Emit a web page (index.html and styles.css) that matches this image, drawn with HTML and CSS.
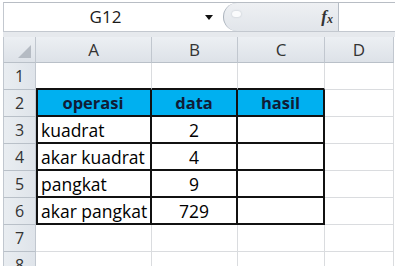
FILE: index.html
```html
<!DOCTYPE html>
<html>
<head lang="en">
    <meta charset="UTF-8">
    <title>Sheet1</title>
    <link rel="stylesheet" href="styles.css">
</head>
<body>
<div class="sheet">
    <div class="formula-bar">
        <div class="name-box">G12</div>
        <span class="drop"></span>
        <div class="fx-pill">
            <span class="knob"></span>
            <span class="fx">f<sub>x</sub></span>
        </div>
        <div class="input"></div>
    </div>
    <div class="band"></div>
    <div class="grid">
        <div class="corner"><span class="tri"></span></div>
        <div class="col-head">A</div>
        <div class="col-head">B</div>
        <div class="col-head">C</div>
        <div class="col-head">D</div>

        <div class="row-head">1</div>
        <div class="cell top"></div>
        <div class="cell top"></div>
        <div class="cell top"></div>
        <div class="cell"></div>

        <div class="row-head">2</div>
        <div class="cell tb first head">operasi</div>
        <div class="cell tb head">data</div>
        <div class="cell tb head">hasil</div>
        <div class="cell"></div>

        <div class="row-head">3</div>
        <div class="cell tb first">kuadrat</div>
        <div class="cell tb num">2</div>
        <div class="cell tb"></div>
        <div class="cell"></div>

        <div class="row-head">4</div>
        <div class="cell tb first">akar kuadrat</div>
        <div class="cell tb num">4</div>
        <div class="cell tb"></div>
        <div class="cell"></div>

        <div class="row-head">5</div>
        <div class="cell tb first">pangkat</div>
        <div class="cell tb num">9</div>
        <div class="cell tb"></div>
        <div class="cell"></div>

        <div class="row-head">6</div>
        <div class="cell tb first">akar pangkat</div>
        <div class="cell tb num">729</div>
        <div class="cell tb"></div>
        <div class="cell"></div>

        <div class="row-head">7</div>
        <div class="cell"></div>
        <div class="cell"></div>
        <div class="cell"></div>
        <div class="cell"></div>

        <div class="row-head">8</div>
        <div class="cell"></div>
        <div class="cell"></div>
        <div class="cell"></div>
        <div class="cell"></div>
    </div>
</div>
</body>
</html>
```

FILE: styles.css
```css
* {
    margin: 0;
    padding: 0;
    box-sizing: border-box;
}

body {
    background-color: #fff;
    font-family: "Open Sans", "Liberation Sans", sans-serif;
    overflow: hidden;
    width: 398px;
    height: 266px;
}

.sheet {
    width: 395px;
    padding: 2px 0 0 3px;
}

/* formula bar */
.formula-bar {
    display: flex;
    height: 30px;
    border-top: 1px solid #b8bdc4;
    border-bottom: 1px solid #c3c8cf;
    border-left: 1px solid #c3c8cf;
}

.name-box {
    width: 197px;
    padding-left: 6px;
    font-size: 17px;
    line-height: 28px;
    text-align: center;
    color: #1a1a1a;
}

.drop {
    width: 0;
    height: 0;
    margin: 12px 10px 0 4px;
    border-left: 4px solid transparent;
    border-right: 4px solid transparent;
    border-top: 5px solid #111;
}

.fx-pill {
    width: 116px;
    display: flex;
    align-items: center;
    justify-content: space-between;
    padding: 0 5px 0 8px;
    background: linear-gradient(#eef0f3, #e1e5ea);
    border-left: 1px solid #aab2bc;
    border-right: 1px solid #b5bcc5;
    border-radius: 14px 0 0 14px;
}

.knob {
    width: 9px;
    height: 6px;
    margin-top: -6px;
    border-radius: 4px;
    background: #fafbfc;
    box-shadow: 0 0 2px #b9c0c8;
}

.fx {
    font-family: "Liberation Serif", serif;
    font-style: italic;
    font-weight: bold;
    font-size: 17px;
    color: #333;
}

.fx sub {
    font-size: 12px;
    vertical-align: -1px;
}

.input {
    flex: 1;
    background: #fff;
}

.band {
    height: 5px;
    background: #e6e9ed;
}

/* sheet grid */
.grid {
    display: grid;
    grid-template-columns: 33px 116px 86px 87px 69px;
    grid-template-rows: 26px repeat(8, 27px);
}

.corner,
.col-head,
.row-head {
    background: linear-gradient(#eceff3, #dde2e8);
    border-right: 1px solid #c1c7cf;
    border-bottom: 1px solid #b9c0c8;
    color: #333;
    font-size: 17px;
    display: flex;
    align-items: center;
    justify-content: center;
}

.corner {
    border-left: 1px solid #c1c7cf;
    justify-content: flex-end;
    align-items: flex-end;
    padding: 0 4px 4px 0;
}

.tri {
    width: 0;
    height: 0;
    border-left: 13px solid transparent;
    border-bottom: 13px solid #b5bbc3;
}

.row-head {
    background: linear-gradient(90deg, #e9edf1, #dfe4ea);
    border-left: 1px solid #c1c7cf;
    font-size: 16px;
}

.cell {
    border-right: 1px solid #dadcdf;
    border-bottom: 1px solid #dadcdf;
    font-size: 17.5px;
    color: #000;
    display: flex;
    align-items: center;
    padding-left: 5px;
    white-space: nowrap;
}

.cell.top {
    border-bottom: 2px solid #111;
}

.cell.tb {
    border-right: 2px solid #111;
    border-bottom: 2px solid #111;
}

.cell.first {
    box-shadow: inset 2px 0 0 #111;
}

.cell.head {
    background-color: #00b0f0;
    color: #101c36;
    font-size: 16.5px;
    font-weight: bold;
    justify-content: center;
    padding-left: 0;
}

.cell.num {
    justify-content: center;
    padding-left: 0;
}
```
